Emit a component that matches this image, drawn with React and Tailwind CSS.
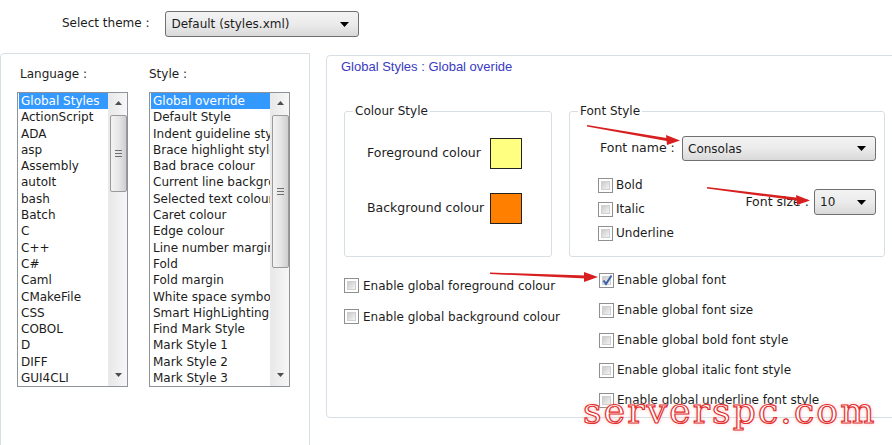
import React from 'react';

const languages = ['Global Styles', 'ActionScript', 'ADA', 'asp', 'Assembly', 'autoIt', 'bash', 'Batch', 'C', 'C++', 'C#', 'Caml', 'CMakeFile', 'CSS', 'COBOL', 'D', 'DIFF', 'GUI4CLI'];
const styles = ['Global override', 'Default Style', 'Indent guideline style', 'Brace highlight style', 'Bad brace colour', 'Current line background', 'Selected text colour', 'Caret colour', 'Edge colour', 'Line number margin', 'Fold', 'Fold margin', 'White space symbol', 'Smart HighLighting', 'Find Mark Style', 'Mark Style 1', 'Mark Style 2', 'Mark Style 3'];

function Arrow({ dir }) {
  // petit triangle noir des barres de défilement
  return (
    <svg width="7" height="4" viewBox="0 0 7 4">
      {dir === 'up' ? <polygon points="0,4 7,4 3.5,0" fill="#4d4d4d" /> : <polygon points="0,0 7,0 3.5,4" fill="#4d4d4d" />}
    </svg>
  );
}

function ListBox({ items, width, thumbH }) {
  return (
    <div className="flex h-[295px] border border-[#8e939b] bg-white" style={{ width }}>
      <div className="flex-1 overflow-hidden pl-[1px]">
        {items.map((it, i) => (
          <div
            key={it}
            className={`h-[16.3px] leading-[16.3px] pl-[2px] whitespace-nowrap ${i === 0 ? 'bg-[#3399ff] text-white' : ''}`}
          >
            {it}
          </div>
        ))}
      </div>
      <div className="w-[19px] shrink-0 flex flex-col items-center bg-gradient-to-r from-[#e8e8e8] to-[#f7f7f7] border-l border-[#eaeaea]">
        <div className="h-[20px] flex items-center justify-center"><Arrow dir="up" /></div>
        <div
          className="mt-[2px] w-[17px] rounded-[2px] border border-[#9a9a9a] bg-gradient-to-r from-[#f3f3f3] via-[#e6e6e6] to-[#cfcfcf] flex flex-col items-center justify-center gap-[2px]"
          style={{ height: thumbH }}
        >
          <div className="w-[7px] h-[1px] bg-[#6f6f6f]" />
          <div className="w-[7px] h-[1px] bg-[#6f6f6f]" />
          <div className="w-[7px] h-[1px] bg-[#6f6f6f]" />
        </div>
        <div className="flex-1" />
        <div className="h-[22px] flex items-center justify-center"><Arrow dir="down" /></div>
      </div>
    </div>
  );
}

function Combo({ value, className }) {
  return (
    <div className={`flex shrink-0 items-center justify-between rounded-[3px] border border-[#707070] bg-gradient-to-b from-[#f3f3f3] via-[#ebebeb] to-[#d9d9d9] pl-[5px] pr-[9px] ${className}`}>
      <span>{value}</span>
      <svg width="9" height="5" viewBox="0 0 9 5"><polygon points="0,0 9,0 4.5,5" fill="#000" /></svg>
    </div>
  );
}

function CheckBox({ checked }) {
  return (
    <span className="w-[15px] h-[15px] shrink-0 border border-[#8e8f8f] bg-white p-[2px] flex">
      <span className="relative flex-1 bg-gradient-to-br from-[#cbcbcb] to-[#f4f4f4] border border-[#d0d0d0]">
        {checked && (
          <svg className="absolute left-[-2px] top-[-3px]" width="13" height="13" viewBox="0 0 13 13">
            <path d="M2.5 6.5 L5 10 L10.5 1.5" stroke="#3b5fa8" strokeWidth="2" fill="none" />
          </svg>
        )}
      </span>
    </span>
  );
}

function CheckRow({ label, checked, h, gap = 'gap-[3px]' }) {
  return (
    <div className={`flex items-center ${gap}`} style={{ height: h }}>
      <CheckBox checked={checked} />
      <span className="whitespace-nowrap">{label}</span>
    </div>
  );
}

export default function App() {
  return (
    <div className="relative w-[892px] h-[445px] overflow-hidden bg-white text-[12px] text-[#1c1c1c] font-['DejaVu_Sans',sans-serif]">
      {/* Sélection du thème */}
      <div className="h-[53px] flex items-start pt-[11px] pl-[62px]">
        <span className="h-[25px] leading-[25px]">Select theme :</span>
        <Combo value="Default (styles.xml)" className="ml-[16px] w-[194px] h-[26px]" />
      </div>

      <div className="flex items-start">
        {/* Panneau gauche : langages et styles */}
        <div className="w-[310px] shrink-0 h-[420px] rounded-tl-[4px] border border-[#d6dfe5] pt-[13px]">
          <div className="flex pl-[16px] gap-[21px]">
            <div>
              <div className="h-[14px] leading-[14px] pl-[3px]">Language :</div>
              <div className="mt-[11px]"><ListBox items={languages} width={111} thumbH={77} /></div>
            </div>
            <div>
              <div className="h-[14px] leading-[14px]">Style :</div>
              <div className="mt-[11px]"><ListBox items={styles} width={141} thumbH={153} /></div>
            </div>
          </div>
        </div>

        {/* Panneau droit : style global */}
        <div className="ml-[16px] mt-[2px] w-[600px] shrink-0 h-[363px] rounded-[4px] border border-[#d6dfe5] pt-[4px]">
          <div className="pl-[14px] h-[14px] leading-[14px] text-[13px] text-[#3a3ac4] font-['Liberation_Sans',sans-serif]">Global Styles : Global overide</div>

          <div className="pl-[17px] mt-[30px] flex gap-[17px]">
            <fieldset className="w-[208px] shrink-0 h-[153px] rounded-[3px] border border-[#d6dfe5]">
              <legend className="ml-[8px] px-[2px] h-[14px] leading-[14px]">Colour Style</legend>
              <div className="pl-[22px] pt-[20px]">
                <div className="flex items-center">
                  <span className="w-[123px] text-[12.5px]">Foreground colour</span>
                  <span className="w-[32px] h-[31px] border border-[#222] bg-[#ffff80]" />
                </div>
                <div className="flex items-center mt-[24px]">
                  <span className="w-[123px] text-[12.5px]">Background colour</span>
                  <span className="w-[32px] h-[31px] border border-[#222] bg-[#ff8000]" />
                </div>
              </div>
            </fieldset>

            <fieldset className="w-[316px] shrink-0 h-[153px] rounded-[3px] border border-[#d6dfe5]">
              <legend className="ml-[8px] px-[2px] h-[14px] leading-[14px]">Font Style</legend>
              <div className="flex items-center pl-[30px] pt-[18px]">
                <span className="w-[82px] text-[12.5px]">Font name :</span>
                <Combo value="Consolas" className="w-[194px] h-[25px]" />
              </div>
              <div className="flex pl-[28px] pr-[8px] mt-[12px]">
                <div className="flex flex-col">
                  <CheckRow label="Bold" h={24} />
                  <CheckRow label="Italic" h={24} />
                  <CheckRow label="Underline" h={24} />
                </div>
                <div className="flex-1 flex items-center justify-end mt-[16px] self-start gap-[5px]">
                  <span className="text-[12.5px]">Font size :</span>
                  <Combo value="10" className="w-[62px] h-[26px]" />
                </div>
              </div>
            </fieldset>
          </div>

          <div className="pl-[17px] flex">
            <div className="w-[255px] shrink-0 mt-[13px]">
              <CheckRow label="Enable global foreground colour" h={31} gap="gap-[4px]" />
              <CheckRow label="Enable global background colour" h={31} gap="gap-[4px]" />
            </div>
            <div className="mt-[8px]">
              <CheckRow label="Enable global font" checked h={30} />
              <CheckRow label="Enable global font size" h={30} />
              <CheckRow label="Enable global bold font style" h={30} />
              <CheckRow label="Enable global italic font style" h={30} />
              <CheckRow label="Enable global underline font style" h={30} />
            </div>
          </div>
        </div>
      </div>

      {/* Flèches rouges d'annotation */}
      <svg className="absolute inset-0 pointer-events-none" width="892" height="445">
        <polygon points="587,125 668,138.2 668,141.2 587,126.5" fill="#d81f1f" />
        <polygon points="680,140.5 666,135 667,145" fill="#d81f1f" />
        <polygon points="707,187 798,197.7 798,200.7 707,188.5" fill="#d81f1f" />
        <polygon points="810,200.5 796,195 797,205" fill="#d81f1f" />
        <polygon points="490,272.5 586,275.5 586,278.5 490,274" fill="#d81f1f" />
        <polygon points="598,277 584,272 584,282" fill="#d81f1f" />
      </svg>

      {/* Filigrane */}
      <div className="absolute left-[583px] top-[393px] text-[36px] leading-[36px] tracking-[2.2px] text-white font-['DejaVu_Serif',serif] [-webkit-text-stroke:1.2px_#e2302f] [text-shadow:0_0_4px_#ffb3b3]">
        serverspc.com
      </div>
    </div>
  );
}
